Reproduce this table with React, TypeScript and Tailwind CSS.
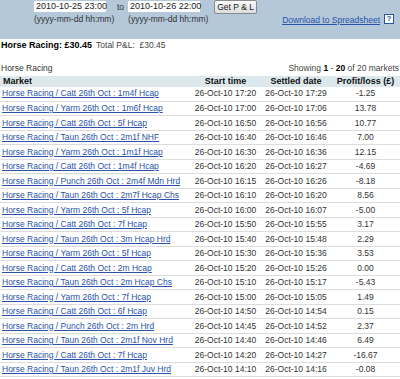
const rows: [string, string, string, string][] = [
  ["Horse Racing / Catt 26th Oct : 1m4f Hcap", "26-Oct-10 17:20", "26-Oct-10 17:29", "-1.25"],
  ["Horse Racing / Yarm 26th Oct : 1m6f Hcap", "26-Oct-10 17:00", "26-Oct-10 17:06", "13.78"],
  ["Horse Racing / Catt 26th Oct : 5f Hcap", "26-Oct-10 16:50", "26-Oct-10 16:56", "10.77"],
  ["Horse Racing / Taun 26th Oct : 2m1f NHF", "26-Oct-10 16:40", "26-Oct-10 16:46", "7.00"],
  ["Horse Racing / Yarm 26th Oct : 1m1f Hcap", "26-Oct-10 16:30", "26-Oct-10 16:36", "12.15"],
  ["Horse Racing / Catt 26th Oct : 1m4f Hcap", "26-Oct-10 16:20", "26-Oct-10 16:27", "-4.69"],
  ["Horse Racing / Punch 26th Oct : 2m4f Mdn Hrd", "26-Oct-10 16:15", "26-Oct-10 16:26", "-8.18"],
  ["Horse Racing / Taun 26th Oct : 2m7f Hcap Chs", "26-Oct-10 16:10", "26-Oct-10 16:20", "8.56"],
  ["Horse Racing / Yarm 26th Oct : 5f Hcap", "26-Oct-10 16:00", "26-Oct-10 16:07", "-5.00"],
  ["Horse Racing / Catt 26th Oct : 7f Hcap", "26-Oct-10 15:50", "26-Oct-10 15:55", "3.17"],
  ["Horse Racing / Taun 26th Oct : 3m Hcap Hrd", "26-Oct-10 15:40", "26-Oct-10 15:48", "2.29"],
  ["Horse Racing / Yarm 26th Oct : 5f Hcap", "26-Oct-10 15:30", "26-Oct-10 15:36", "3.53"],
  ["Horse Racing / Catt 26th Oct : 2m Hcap", "26-Oct-10 15:20", "26-Oct-10 15:26", "0.00"],
  ["Horse Racing / Taun 26th Oct : 2m Hcap Chs", "26-Oct-10 15:10", "26-Oct-10 15:17", "-5.43"],
  ["Horse Racing / Yarm 26th Oct : 7f Hcap", "26-Oct-10 15:00", "26-Oct-10 15:05", "1.49"],
  ["Horse Racing / Catt 26th Oct : 6f Hcap", "26-Oct-10 14:50", "26-Oct-10 14:54", "0.15"],
  ["Horse Racing / Punch 26th Oct : 2m Hrd", "26-Oct-10 14:45", "26-Oct-10 14:52", "2.37"],
  ["Horse Racing / Taun 26th Oct : 2m1f Nov Hrd", "26-Oct-10 14:40", "26-Oct-10 14:46", "6.49"],
  ["Horse Racing / Catt 26th Oct : 7f Hcap", "26-Oct-10 14:20", "26-Oct-10 14:27", "-16.67"],
  ["Horse Racing / Taun 26th Oct : 2m1f Juv Hrd", "26-Oct-10 14:10", "26-Oct-10 14:16", "-0.08"],
];

export default function App() {
  return (
    <div
      className="w-[400px] h-[379px] overflow-hidden bg-white text-[8.5px] leading-none text-[#333]"
      style={{ fontFamily: '"Liberation Sans", Arial, sans-serif' }}
    >
      {/* Date filter panel */}
      <div className="h-[39px] bg-[#b4c8d9] flex">
        <div className="ml-[34px] mt-[1px] w-[81px] flex flex-col">
          <div className="h-[11px] w-[72px] bg-white px-[2px] flex items-center whitespace-nowrap text-[#222] text-[9px]">2010-10-25 23:00</div>
          <div className="mt-[3px] whitespace-nowrap text-[#333]">(yyyy-mm-dd hh:mm)</div>
        </div>
        <div className="ml-[2px] mt-[3px]">to</div>
        <div className="ml-[4px] mt-[1px] w-[81px] flex flex-col">
          <div className="h-[11px] w-[72px] bg-white px-[2px] flex items-center whitespace-nowrap text-[#222] text-[9px]">2010-10-26 22:00</div>
          <div className="mt-[3px] whitespace-nowrap text-[#333]">(yyyy-mm-dd hh:mm)</div>
        </div>
        <div className="ml-[5px] h-[14px] w-[43px] rounded-[2px] border border-[#8a8a8a] bg-gradient-to-b from-[#fafafa] to-[#dcdcdc] flex items-center justify-center whitespace-nowrap text-[#222]">
          Get P &amp; L
        </div>
        <div className="ml-auto mr-[6px] mt-[14px] flex items-start gap-[4px]">
          <span className="mt-[2px] text-[#2a52a8] underline">Download to Spreadsheet</span>
          <span className="h-[10px] w-[10px] border border-[#2a52a8] bg-white text-[#2a52a8] font-bold flex items-center justify-center text-[8px]">?</span>
        </div>
      </div>

      {/* Totals */}
      <div className="mt-[2px] flex items-center gap-[4px] px-[1px]">
        <span className="font-bold text-black text-[9px]">Horse Racing: £30.45</span>
        <span className="text-[#444]">Total P&amp;L:&nbsp; £30.45</span>
      </div>

      <div className="mt-[14px] flex justify-between px-[1px]">
        <span>Horse Racing</span>
        <span className="text-[#444]">
          Showing <b className="text-black">1</b> - <b className="text-black">20</b> of 20 markets
        </span>
      </div>

      {/* Markets table */}
      <table className="mt-[3px] w-[400px] border-collapse table-fixed">
        <colgroup>
          <col className="w-[190px]" />
          <col className="w-[71px]" />
          <col className="w-[70px]" />
          <col className="w-[69px]" />
        </colgroup>
        <thead>
          <tr className="h-[11px] bg-[#dce8ec] text-[#111] font-bold text-[9px]">
            <th className="text-left pl-[3px] p-0">Market</th>
            <th className="text-center p-0">Start time</th>
            <th className="text-center p-0">Settled date</th>
            <th className="text-center p-0">Profit/loss (£)</th>
          </tr>
        </thead>
        <tbody>
          {rows.map(([market, start, settled, pl], i) => (
            <tr key={i} className="h-[14.5px] border-b border-[#dcdcdc]">
              <td className="pl-[2px] p-0 whitespace-nowrap overflow-hidden">
                <span className="text-[#2a52a8] underline">{market}</span>
              </td>
              <td className="text-center p-0 whitespace-nowrap">{start}</td>
              <td className="text-center p-0 whitespace-nowrap">{settled}</td>
              <td className="text-center p-0">{pl}</td>
            </tr>
          ))}
        </tbody>
      </table>
    </div>
  );
}
